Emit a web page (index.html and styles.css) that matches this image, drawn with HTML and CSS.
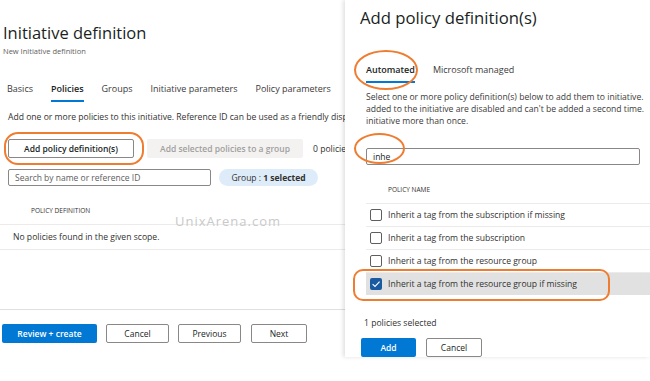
FILE: index.html
```html
<!DOCTYPE html>
<html lang="en">
<head>
  <meta charset="UTF-8" />
  <title>Initiative definition</title>
  <link rel="stylesheet" href="styles.css">
</head>
<body>
  <div class="screen">
    <main class="blade">
      <h1 class="blade-title">Initiative definition</h1>
      <div class="blade-sub">New Initiative definition</div>

      <nav class="tabs">
        <span class="tab">Basics</span>
        <span class="tab active">Policies</span>
        <span class="tab">Groups</span>
        <span class="tab">Initiative parameters</span>
        <span class="tab">Policy parameters</span>
      </nav>

      <p class="intro">Add one or more policies to this initiative. Reference ID can be used as a friendly display name</p>

      <div class="toolbar">
        <button class="btn btn-outline">Add policy definition(s)</button>
        <button class="btn btn-disabled">Add selected policies to a group</button>
        <span class="count">0 policies selected</span>
      </div>

      <div class="filter">
        <input type="text" class="search" placeholder="Search by name or reference ID" />
        <span class="pill">Group : <b>1 selected</b></span>
      </div>

      <div class="grid">
        <div class="grid-head">POLICY DEFINITION</div>
        <div class="grid-row">No policies found in the given scope.</div>
      </div>

      <footer class="actions">
        <button class="btn btn-primary wide">Review + create</button>
        <button class="btn btn-plain">Cancel</button>
        <button class="btn btn-plain">Previous</button>
        <button class="btn btn-plain next">Next</button>
      </footer>

      <div class="watermark">UnixArena.com</div>
      <div class="mark mark-add"></div>
    </main>

    <aside class="panel">
      <h2 class="panel-title">Add policy definition(s)</h2>

      <nav class="tabs panel-tabs">
        <span class="tab active">Automated</span>
        <span class="tab">Microsoft managed</span>
      </nav>

      <p class="panel-text">Select one or more policy definition(s) below to add them to initiative.<br>added to the initiative are disabled and can't be added a second time.<br>initiative more than once.</p>

      <input type="text" class="search panel-search" value="inhe" />

      <div class="list">
        <div class="list-head">POLICY NAME</div>
        <label class="list-row"><span class="check"></span>Inherit a tag from the subscription if missing</label>
        <label class="list-row"><span class="check"></span>Inherit a tag from the subscription</label>
        <label class="list-row"><span class="check"></span>Inherit a tag from the resource group</label>
        <label class="list-row selected"><span class="check on"><svg viewBox="0 0 12 12" width="12" height="12"><path d="M2.6 6.2 L5 8.5 L9.6 3.6" fill="none" stroke="#fff" stroke-width="1.1"/></svg></span>Inherit a tag from the resource group if missing</label>
      </div>

      <div class="selected-count">1 policies selected</div>

      <div class="panel-actions">
        <button class="btn btn-primary small">Add</button>
        <button class="btn btn-plain">Cancel</button>
      </div>

      <div class="mark mark-tab"></div>
      <div class="mark mark-search"></div>
      <div class="mark mark-row"></div>
    </aside>
  </div>
</body>
</html>
```

FILE: styles.css
```css
body {
  margin: 0;
  font-family: "Segoe UI", "Open Sans", sans-serif;
  color: #323130;
  background: #ffffff;
}

.screen {
  width: 650px;
  height: 381px;
  overflow: hidden;
  display: flex;
  align-items: flex-start;
}

/* left blade */
.blade {
  position: relative;
  flex: 0 0 345px;
  height: 357px;
  overflow: hidden;
  white-space: nowrap;
}

.blade-title {
  margin: 22px 0 0 3px;
  font-size: 16.5px;
  line-height: 22px;
  font-weight: 400;
  color: #201f1e;
}

.blade-sub {
  margin: 2px 0 0 3px;
  font-size: 7.5px;
  color: #605e5c;
}

.tabs {
  display: flex;
  gap: 18px;
  margin: 26px 0 0 7px;
  font-size: 9px;
}

.tab {
  padding-bottom: 5px;
  color: #3b3a39;
  border-bottom: 2px solid transparent;
}

.tab.active {
  font-weight: 600;
  color: #201f1e;
  border-bottom-color: #0078d4;
}

.intro {
  margin: 9px 0 0 8px;
  font-size: 8.6px;
  color: #323130;
}

.toolbar {
  display: flex;
  align-items: center;
  margin: 16px 0 0 8px;
}

.toolbar > * {
  flex-shrink: 0;
}

.btn {
  font-family: inherit;
  font-size: 8.5px;
  height: 19px;
  padding: 0 10px;
  border-radius: 2px;
  cursor: pointer;
}

.btn-outline {
  width: 126px;
  border: 1px solid #8a8886;
  background: #fff;
  color: #201f1e;
  font-weight: 600;
}

.btn-disabled {
  width: 156px;
  margin-left: 13px;
  border: none;
  background: #f3f2f1;
  color: #a19f9d;
  font-weight: 600;
}

.count {
  margin-left: 10px;
  font-size: 8.6px;
}

.filter {
  display: flex;
  align-items: center;
  gap: 8px;
  margin: 11px 0 0 8px;
}

.filter > * {
  flex-shrink: 0;
}

.search {
  box-sizing: border-box;
  width: 203px;
  height: 17px;
  padding: 0 6px;
  border: 1px solid #8a8886;
  border-radius: 2px;
  font-family: inherit;
  font-size: 8.5px;
  color: #201f1e;
}

.search::placeholder {
  color: #605e5c;
}

.pill {
  width: 99px;
  height: 17px;
  line-height: 17px;
  text-align: center;
  border-radius: 9px;
  background: #deecf9;
  font-size: 8.5px;
}

.grid {
  margin-top: 20px;
}

.grid-head {
  padding: 0 0 9px 31px;
  font-size: 6.5px;
  color: #323130;
  border-bottom: 1px solid #edebe9;
}

.grid-row {
  padding: 6px 13px;
  font-size: 8.6px;
  border-bottom: 1px solid #edebe9;
}

.actions {
  display: flex;
  gap: 9px;
  margin-top: 59px;
  padding: 14px 0 0 2px;
  border-top: 1px solid #e1dfdd;
}

.btn-primary {
  border: none;
  background: #0078d4;
  color: #fff;
  font-weight: 600;
}

.btn-plain {
  width: 63px;
  border: 1px solid #8a8886;
  background: #fff;
  color: #201f1e;
}

.wide {
  width: 95px;
}

.next {
  width: 56px;
  margin-left: 1px;
}

.watermark {
  position: absolute;
  left: 175px;
  top: 212px;
  font-size: 13px;
  letter-spacing: 1px;
  color: #c9c9c9;
}

/* orange annotations */
.mark {
  position: absolute;
  border: 2px solid #ef7d31;
  box-sizing: border-box;
}

.mark-add {
  left: 4px;
  top: 132px;
  width: 140px;
  height: 33px;
  border-radius: 14px;
}

/* right panel */
.panel {
  position: relative;
  flex: 1;
  height: 357px;
  box-shadow: -2px 0 4px rgba(0, 0, 0, 0.12);
  white-space: nowrap;
  overflow: hidden;
}

.panel-title {
  margin: 6px 0 0 15px;
  font-size: 16.7px;
  line-height: 24px;
  font-weight: 400;
  color: #201f1e;
}

.panel-tabs {
  margin: 33px 0 0 21px;
}

.panel-text {
  margin: 8px 0 0 21px;
  font-size: 8.6px;
  line-height: 12px;
  color: #3b3a39;
}

.panel-search {
  display: block;
  width: 274px;
  margin: 21px 0 0 21px;
}

.list {
  margin: 20px 0 0 21px;
}

.list-head {
  padding: 0 0 9px 22px;
  font-size: 6.5px;
  border-bottom: 1px solid #edebe9;
}

.list-row {
  display: flex;
  align-items: center;
  gap: 6px;
  height: 22px;
  padding-left: 4px;
  font-size: 8.6px;
  border-bottom: 1px solid #edebe9;
}

.list-row.selected {
  background: #e1e1e1;
  border-bottom: none;
}

.check {
  box-sizing: border-box;
  width: 12px;
  height: 12px;
  border: 1px solid #605e5c;
  border-radius: 2px;
}

.check.on {
  border: none;
  background: #1a5aa0;
}

.check svg {
  display: block;
}

.selected-count {
  margin: 22px 0 0 19px;
  font-size: 8.6px;
}

.panel-actions {
  display: flex;
  gap: 10px;
  margin: 9px 0 0 16px;
}

.small {
  width: 55px;
}

.panel-actions .btn-plain {
  width: 56px;
}

.mark-tab {
  left: 9px;
  top: 50px;
  width: 64px;
  height: 40px;
  border-radius: 50%;
}

.mark-search {
  left: 9px;
  top: 133px;
  width: 51px;
  height: 31px;
  border-radius: 50%;
}

.mark-row {
  left: 8px;
  top: 269px;
  width: 257px;
  height: 32px;
  border-radius: 10px;
}
```
